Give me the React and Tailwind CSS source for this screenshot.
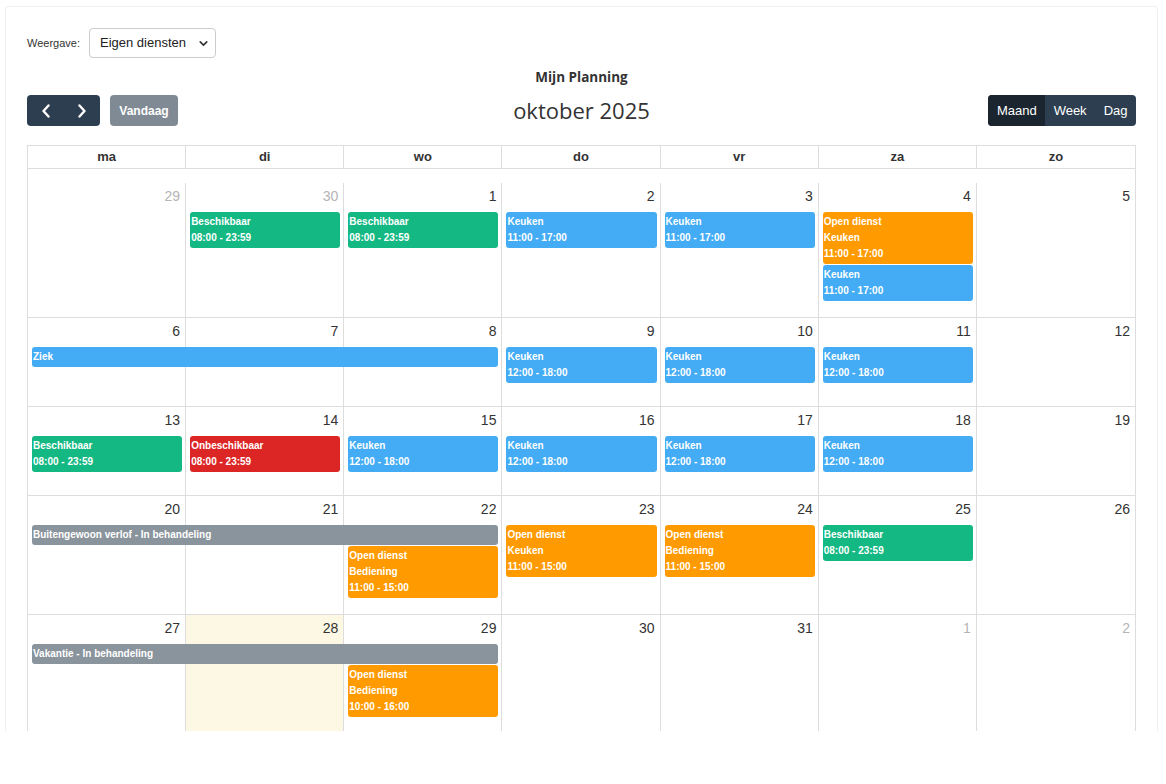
import { ChevronDown } from "lucide-react";

const eventColors = {
  green: "bg-[#14b883]",
  blue: "bg-[#43acf4]",
  orange: "bg-[#ff9a00]",
  red: "bg-[#dc2626]",
  gray: "bg-[#8a949c]",
};

const colStart = ["", "col-start-1", "col-start-2", "col-start-3", "col-start-4", "col-start-5", "col-start-6", "col-start-7"];
const colSpan = ["", "col-span-1", "col-span-2", "col-span-3"];
const rowStart = ["", "row-start-1", "row-start-2", "row-start-3"];
const rowSpan = ["", "row-span-1", "row-span-2"];

const dayNames = ["ma", "di", "wo", "do", "vr", "za", "zo"];

const weeks = [
  {
    days: [29, 30, 1, 2, 3, 4, 5],
    other: [0, 1],
    events: [
      { col: 2, row: 2, color: "green", lines: ["Beschikbaar", "08:00 - 23:59"] },
      { col: 3, row: 2, color: "green", lines: ["Beschikbaar", "08:00 - 23:59"] },
      { col: 4, row: 2, color: "blue", lines: ["Keuken", "11:00 - 17:00"] },
      { col: 5, row: 2, color: "blue", lines: ["Keuken", "11:00 - 17:00"] },
      { col: 6, row: 2, color: "orange", lines: ["Open dienst", "Keuken", "11:00 - 17:00"] },
      { col: 6, row: 3, color: "blue", lines: ["Keuken", "11:00 - 17:00"], gap: true },
    ],
  },
  {
    days: [6, 7, 8, 9, 10, 11, 12],
    events: [
      { col: 1, span: 3, row: 2, color: "blue", lines: ["Ziek"] },
      { col: 4, row: 2, color: "blue", lines: ["Keuken", "12:00 - 18:00"] },
      { col: 5, row: 2, color: "blue", lines: ["Keuken", "12:00 - 18:00"] },
      { col: 6, row: 2, color: "blue", lines: ["Keuken", "12:00 - 18:00"] },
    ],
  },
  {
    days: [13, 14, 15, 16, 17, 18, 19],
    events: [
      { col: 1, row: 2, color: "green", lines: ["Beschikbaar", "08:00 - 23:59"] },
      { col: 2, row: 2, color: "red", lines: ["Onbeschikbaar", "08:00 - 23:59"] },
      { col: 3, row: 2, color: "blue", lines: ["Keuken", "12:00 - 18:00"] },
      { col: 4, row: 2, color: "blue", lines: ["Keuken", "12:00 - 18:00"] },
      { col: 5, row: 2, color: "blue", lines: ["Keuken", "12:00 - 18:00"] },
      { col: 6, row: 2, color: "blue", lines: ["Keuken", "12:00 - 18:00"] },
    ],
  },
  {
    days: [20, 21, 22, 23, 24, 25, 26],
    events: [
      { col: 1, span: 3, row: 2, color: "gray", lines: ["Buitengewoon verlof - In behandeling"] },
      { col: 3, row: 3, color: "orange", lines: ["Open dienst", "Bediening", "11:00 - 15:00"], gap: true },
      { col: 4, row: 2, rows: 2, color: "orange", lines: ["Open dienst", "Keuken", "11:00 - 15:00"] },
      { col: 5, row: 2, rows: 2, color: "orange", lines: ["Open dienst", "Bediening", "11:00 - 15:00"] },
      { col: 6, row: 2, rows: 2, color: "green", lines: ["Beschikbaar", "08:00 - 23:59"] },
    ],
  },
  {
    days: [27, 28, 29, 30, 31, 1, 2],
    other: [5, 6],
    today: 1,
    events: [
      { col: 1, span: 3, row: 2, color: "gray", lines: ["Vakantie - In behandeling"] },
      { col: 3, row: 3, color: "orange", lines: ["Open dienst", "Bediening", "10:00 - 16:00"], gap: true },
    ],
  },
];

const CalEvent = ({ ev }) => (
  <div
    className={`${colStart[ev.col]} ${colSpan[ev.span || 1]} ${rowStart[ev.row]} ${rowSpan[ev.rows || 1]} ${eventColors[ev.color]} ${ev.gap ? "mt-px" : ""} self-start mx-[4px] rounded-[3px] px-[1px] py-[2px] text-[10px] font-bold leading-4 text-white whitespace-nowrap overflow-hidden`}
  >
    {ev.lines.map((l, i) => (
      <div key={i}>{l}</div>
    ))}
  </div>
);

const Week = ({ week, first }) => (
  <div
    className={`grid grid-cols-7 grid-rows-[29px_auto_auto_minmax(16px,1fr)] min-h-[89px] ${first ? "" : "border-t border-[#dddddd]"}`}
  >
    {week.days.map((d, i) => (
      <div
        key={i}
        className={`${colStart[i + 1]} row-span-full ${i < 6 ? "border-r border-[#dddddd]" : ""} ${week.today === i ? "bg-[#fcf8e3]" : ""}`}
      >
        <div
          className={`pt-[4px] pr-[5px] text-right text-[14px] leading-[18px] ${week.other && week.other.includes(i) ? "text-[#b5b5b5]" : "text-[#333333]"}`}
        >
          {d}
        </div>
      </div>
    ))}
    {week.events.map((ev, i) => (
      <CalEvent key={i} ev={ev} />
    ))}
  </div>
);

export default function App() {
  return (
    <div className="h-[784px] w-[1166px] bg-white pl-[5px] pt-[6px] font-['Liberation_Sans',Arial,sans-serif] text-[#333333]">
      <div className="h-[725px] w-[1153px] overflow-hidden rounded-t-[4px] border border-b-0 border-[#f0f0f0] px-[21px] pt-[21px]">
        <div className="flex items-center gap-[9px]">
          <span className="text-[11px] text-[#333333]">Weergave:</span>
          <div className="relative">
            <select
              defaultValue="eigen"
              className="h-[30px] w-[127px] appearance-none rounded-[4px] border border-[#cccccc] bg-white pl-[10px] text-[13px] text-[#222222] outline-none"
            >
              <option value="eigen">Eigen diensten</option>
              <option value="alle">Alle diensten</option>
            </select>
            <ChevronDown className="pointer-events-none absolute right-[6px] top-[9px] h-[13px] w-[13px] text-[#333333]" strokeWidth={3} />
          </div>
        </div>

        <div className="mt-[10px] text-center font-['Open_Sans',sans-serif] text-[13.5px] font-bold leading-[18px] text-[#333333]">
          Mijn Planning
        </div>

        <div className="mt-[9px] grid h-[31px] grid-cols-3 items-center">
          <div className="flex items-center gap-[10px]">
            <div className="flex h-[31px] overflow-hidden rounded-[4px] bg-[#2c3e50]">
              <button className="flex w-[37px] items-center justify-center text-white">
                <svg width="10" height="14" viewBox="0 0 10 14" fill="none">
                  <path d="M7.5 1.5 2.5 7l5 5.5" stroke="white" strokeWidth="2.4" strokeLinecap="round" strokeLinejoin="round" />
                </svg>
              </button>
              <button className="flex w-[36px] items-center justify-center text-white">
                <svg width="10" height="14" viewBox="0 0 10 14" fill="none">
                  <path d="M2.5 1.5 7.5 7l-5 5.5" stroke="white" strokeWidth="2.4" strokeLinecap="round" strokeLinejoin="round" />
                </svg>
              </button>
            </div>
            <button className="h-[31px] w-[68px] rounded-[4px] bg-[#2c3e50] text-[12px] font-bold text-white opacity-60">
              Vandaag
            </button>
          </div>
          <div className="text-center font-['Open_Sans',sans-serif] text-[22px] leading-[31px] text-[#333333]">
            oktober 2025
          </div>
          <div className="flex justify-end">
            <div className="flex h-[31px] overflow-hidden rounded-[4px] bg-[#2c3e50] text-[13px] text-white">
              <button className="bg-[#1a252f] px-[8.5px]">Maand</button>
              <button className="px-[8.5px]">Week</button>
              <button className="px-[8.5px]">Dag</button>
            </div>
          </div>
        </div>

        <div className="mt-[19px] border-x border-[#dddddd]">
          <div className="grid h-[24px] grid-cols-7 border-y border-[#dddddd]">
            {dayNames.map((n, i) => (
              <div
                key={n}
                className={`flex items-center justify-center text-[13px] font-bold text-[#333333] ${i < 6 ? "border-r border-[#dddddd]" : ""}`}
              >
                {n}
              </div>
            ))}
          </div>
          <div className="h-[14px]" />
          {weeks.map((w, i) => (
            <Week key={i} week={w} first={i === 0} />
          ))}
        </div>
      </div>
    </div>
  );
}
